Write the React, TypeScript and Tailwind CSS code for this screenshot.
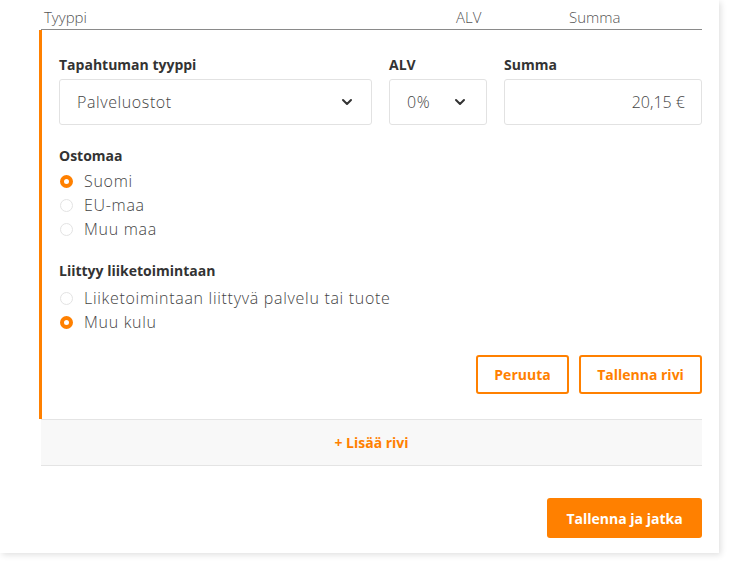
import { ChevronDown } from "lucide-react";

interface RadioProps {
  label: string;
  checked?: boolean;
}

const Radio = ({ label, checked }: RadioProps) => (
  <label className="flex h-6 items-center">
    <span
      className={
        checked
          ? "ml-px h-[13px] w-[13px] rounded-full border-[4px] border-[#ff8000] bg-white"
          : "ml-px h-[13px] w-[13px] rounded-full border-[1.5px] border-[#e3e3e3] bg-white"
      }
    />
    <span className="ml-[11px] text-[16px] leading-6 font-light tracking-[0.7px] text-[#444]">{label}</span>
  </label>
);

const SelectBox = ({ value, className }: { value: string; className: string }) => (
  <div
    className={`flex h-[46px] items-center justify-between rounded-[3px] border border-[#e2e2e2] bg-white ${className}`}
  >
    <span className="text-[16px] font-light tracking-[0.6px] text-[#444]">{value}</span>
    <ChevronDown className="h-4 w-4 text-[#333]" strokeWidth={3} />
  </div>
);

const App = () => {
  return (
    <div
      className="h-[574px] w-[746px] bg-white"
      style={{ fontFamily: "'Open Sans', Lato, sans-serif" }}
    >
      <div className="h-[553px] w-[719px] bg-white pl-[41px] pr-[17px] shadow-[2px_2px_6px_rgba(0,0,0,0.12)]">
        {/* table header */}
        <div className="flex h-[30px] items-end border-b border-[#8a8a8a] pb-[3px] text-[15px] leading-[18px] font-light text-[#555]">
          <span className="ml-[3px] w-[412px]">Tyyppi</span>
          <span className="w-[113px]">ALV</span>
          <span>Summa</span>
        </div>

        {/* editable row */}
        <div className="-ml-[2px] border-l-[3px] border-[#ff8000] pb-[25px] pl-[17px] pt-[26px]">
          <div className="flex gap-[17px]">
            <div className="w-[313px]">
              <div className="mb-[6px] text-[14px] leading-[17px] font-bold text-[#333]">Tapahtuman tyyppi</div>
              <SelectBox value="Palveluostot" className="pl-[17px] pr-[16px]" />
            </div>
            <div className="w-[98px]">
              <div className="mb-[6px] text-[14px] leading-[17px] font-bold text-[#333]">ALV</div>
              <SelectBox value="0%" className="pl-[17px] pr-[18px]" />
            </div>
            <div className="w-[198px]">
              <div className="mb-[6px] text-[14px] leading-[17px] font-bold text-[#333]">Summa</div>
              <div className="flex h-[46px] items-center justify-end rounded-[3px] border border-[#e2e2e2] bg-white pr-[16px] text-[16px] font-light text-[#444]">
                20,15 €
              </div>
            </div>
          </div>

          <div className="mt-[22px] text-[14px] leading-[17px] font-bold text-[#333]">Ostomaa</div>
          <div className="mt-[5px]">
            <Radio label="Suomi" checked />
            <Radio label="EU-maa" />
            <Radio label="Muu maa" />
          </div>

          <div className="mt-[21px] text-[14px] leading-[17px] font-bold text-[#333]">Liittyy liiketoimintaan</div>
          <div className="mt-[7px]">
            <Radio label="Liiketoimintaan liittyvä palvelu tai tuote" />
            <Radio label="Muu kulu" checked />
          </div>

          <div className="mt-[21px] flex justify-end gap-[10px]">
            <button className="h-[39px] w-[93px] rounded-[3px] border-2 border-[#ff8000] text-[14px] font-bold text-[#ff8000]">
              Peruuta
            </button>
            <button className="h-[39px] w-[123px] rounded-[3px] border-2 border-[#ff8000] text-[14px] font-bold text-[#ff8000]">
              Tallenna rivi
            </button>
          </div>
        </div>

        {/* add row */}
        <div className="flex h-[47px] items-center justify-center border-y border-[#e4e4e4] bg-[#f8f8f8] text-[14px] font-bold text-[#ff8000]">
          + Lisää rivi
        </div>

        <div className="mt-[32px] flex justify-end">
          <button className="h-[40px] w-[155px] rounded-[3px] bg-[#ff8000] text-[14px] font-bold text-white">
            Tallenna ja jatka
          </button>
        </div>
      </div>
    </div>
  );
};

export default App;
